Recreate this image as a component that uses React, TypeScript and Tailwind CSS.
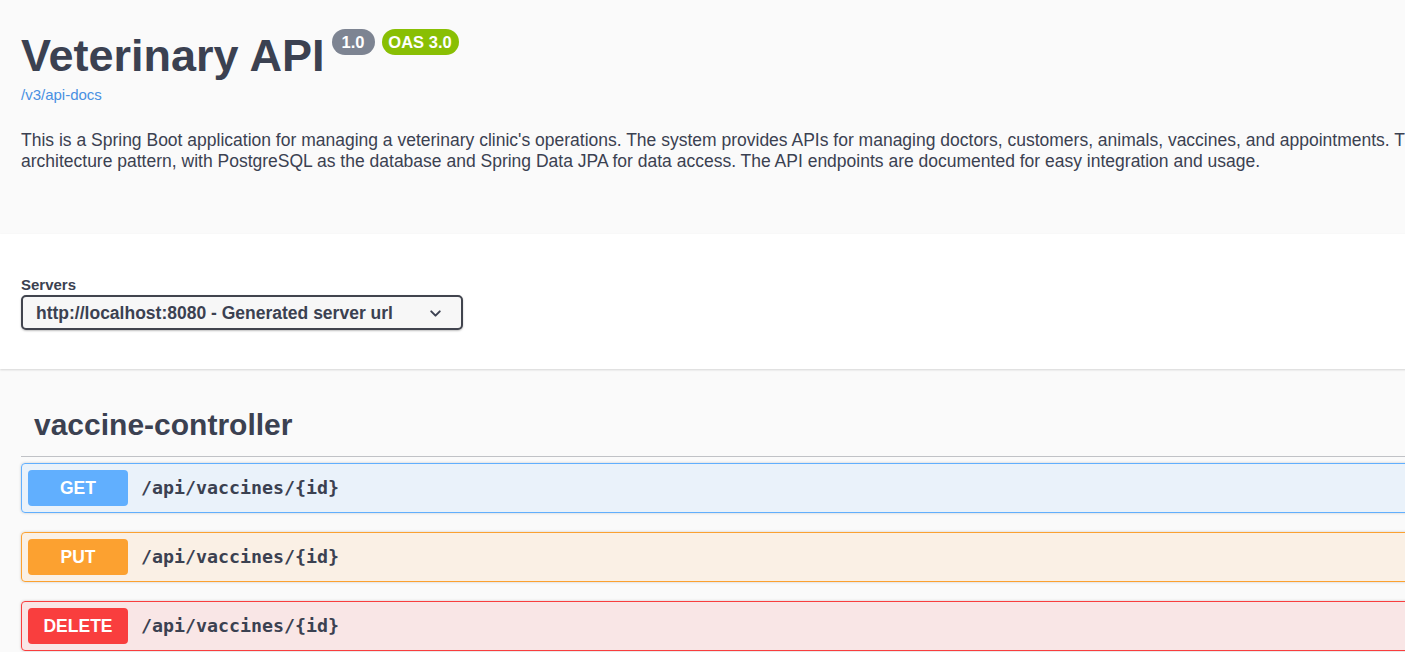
import { ChevronDown } from 'lucide-react'

type Op = { method: string; path: string; badge: string; border: string; bg: string }

const OPS: Op[] = [
  { method: 'GET', path: '/api/vaccines/{id}', badge: 'bg-[#61affe]', border: 'border-[#61affe]', bg: 'bg-[rgba(97,175,254,0.1)]' },
  { method: 'PUT', path: '/api/vaccines/{id}', badge: 'bg-[#fca130]', border: 'border-[#fca130]', bg: 'bg-[rgba(252,161,48,0.1)]' },
  { method: 'DELETE', path: '/api/vaccines/{id}', badge: 'bg-[#f93e3e]', border: 'border-[#f93e3e]', bg: 'bg-[rgba(249,62,62,0.1)]' },
]

function OpRow({ op }: { op: Op }) {
  return (
    <div
      className={`flex items-center h-[50px] p-[6px] border rounded-[4px] shadow-[0_0_3px_rgba(0,0,0,0.19)] ${op.border} ${op.bg}`}
    >
      <div
        className={`w-[100px] h-[36px] rounded-[4px] flex items-center justify-center text-white font-bold text-[17.5px] shrink-0 ${op.badge}`}
      >
        {op.method}
      </div>
      <span className="ml-[13px] font-['DejaVu_Sans_Mono',monospace] font-semibold text-[18.3px] text-[#3b4151]">
        {op.path}
      </span>
    </div>
  )
}

export default function App() {
  return (
    <div className="w-[1405px] h-[652px] overflow-hidden bg-[#fafafa] text-[#3b4151] font-['Liberation_Sans',Arial,sans-serif]">
      <div className="w-[1700px]">
        {/* Info */}
        <section className="h-[234px] px-[21px] pt-[30px]">
          <div className="flex items-start">
            <h1 className="mt-[3px] text-[45px] leading-[45px] font-bold">Veterinary API</h1>
            <div className="flex items-center gap-[7px] ml-[7px] -mt-[1px]">
              <span className="w-[43px] h-[26px] rounded-full bg-[#7d8492] text-white font-bold text-[16.5px] flex items-center justify-center">
                1.0
              </span>
              <span className="w-[77px] h-[26px] rounded-full bg-[#89bf04] text-white font-bold text-[16.5px] flex items-center justify-center">
                OAS 3.0
              </span>
            </div>
          </div>
          <a className="block mt-[8px] text-[15px] leading-[18px] text-[#4990e2]">/v3/api-docs</a>
          <p className="mt-[26px] text-[17.5px] leading-[21px] whitespace-nowrap">
            This is a Spring Boot application for managing a veterinary clinic's operations. The system provides APIs for managing doctors, customers, animals, vaccines, and appointments. The project follows a layered
            <br />
            architecture pattern, with PostgreSQL as the database and Spring Data JPA for data access. The API endpoints are documented for easy integration and usage.
          </p>
        </section>

        {/* Servers */}
        <section className="h-[135px] bg-white shadow-[0_1px_2px_0_rgba(0,0,0,0.15)] px-[21px] pt-[42px]">
          <label className="block text-[15px] leading-[18px] font-bold">Servers</label>
          <div className="mt-[1px] w-[442px] h-[35px] border-2 border-[#41444e] rounded-[5px] bg-[#f7f7f7] shadow-[0_1px_2px_0_rgba(0,0,0,0.25)] flex items-center pl-[13px] pr-[17px] pt-[1px]">
            <span className="text-[17.5px] font-bold flex-1">http://localhost:8080 - Generated server url</span>
            <ChevronDown size={17} strokeWidth={2.8} className="text-[#3b4151]" />
          </div>
        </section>

        {/* Tag */}
        <section className="px-[21px] pt-[41px]">
          <h3 className="pl-[13px] pb-[16px] text-[30px] leading-[30px] font-bold border-b border-[rgba(59,65,81,0.3)]">
            vaccine-controller
          </h3>
          <div className="mt-[6px] flex flex-col gap-[19px]">
            {OPS.map(op => (
              <OpRow key={op.method} op={op} />
            ))}
          </div>
        </section>
      </div>
    </div>
  )
}
